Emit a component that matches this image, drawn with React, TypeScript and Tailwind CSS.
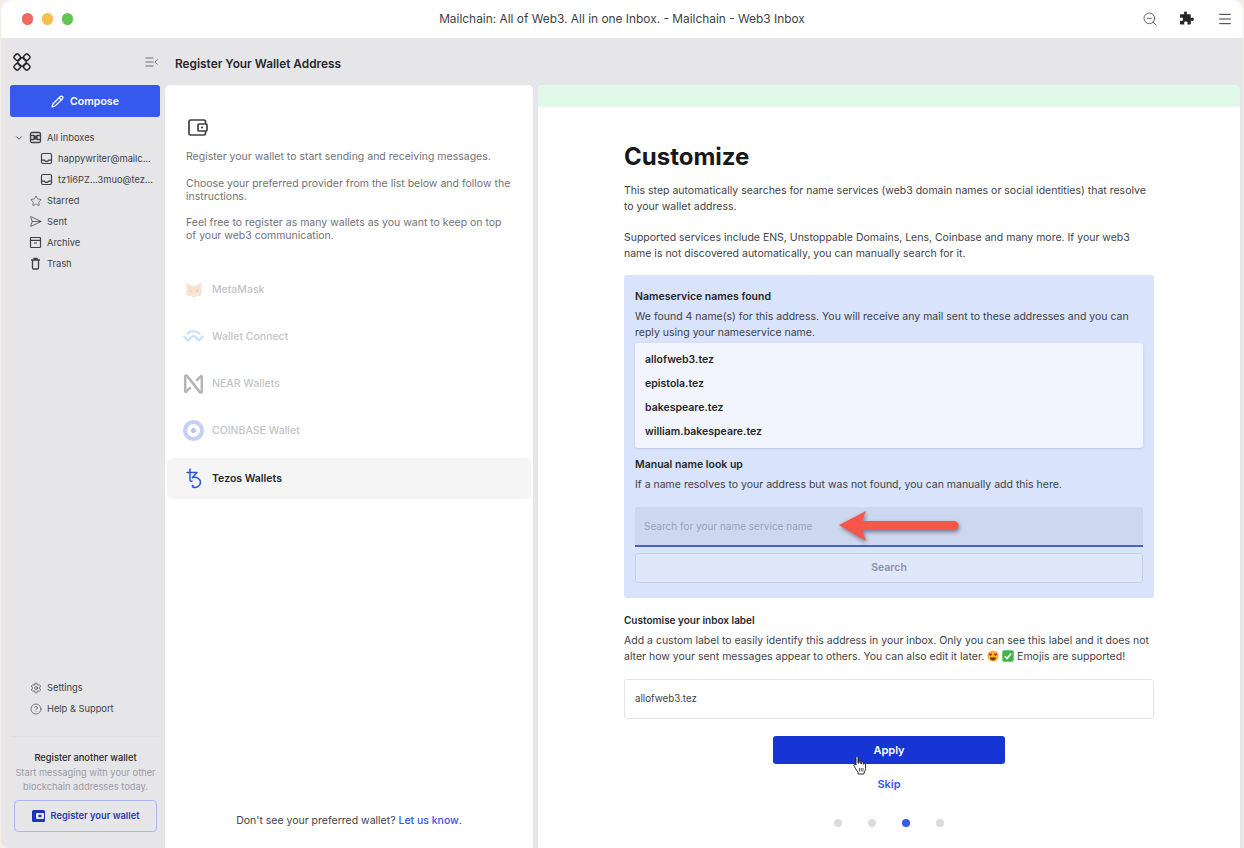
import React from 'react';
import { ChevronDown, Star, SendHorizontal, Settings, CircleHelp, ZoomOut, Menu, Pencil } from 'lucide-react';

function InboxIcon() {
  return (
    <svg width="13" height="13" viewBox="0 0 13 13" fill="none" stroke="#3f3f46" strokeWidth="1.2" className="shrink-0">
      <rect x="1.5" y="1.5" width="10" height="10" rx="1.5" />
      <path d="M1.5 8.2h3l.8 1.2h2.4l.8-1.2h3" />
    </svg>
  );
}

function AllInboxIcon() {
  return (
    <svg width="13" height="13" viewBox="0 0 13 13" fill="none" stroke="#3f3f46" strokeWidth="1.3" className="shrink-0">
      <rect x="1.5" y="1.5" width="10" height="10" rx="1.5" />
      <path d="M1.5 4.5h3l2 1.5 2-1.5h3M1.5 8.5h3l2-1.5 2 1.5h3" />
      <circle cx="6.5" cy="6.5" r="1.6" fill="#3f3f46" />
    </svg>
  );
}

function ArchiveIcon() {
  return (
    <svg width="13" height="13" viewBox="0 0 13 13" fill="none" stroke="#3f3f46" strokeWidth="1.2">
      <rect x="1.5" y="1.5" width="10" height="10" rx="0.8" />
      <path d="M1.5 4.4h10M5 7h3" />
    </svg>
  );
}

function TrashIcon() {
  return (
    <svg width="13" height="13" viewBox="0 0 13 13" fill="none" stroke="#3f3f46" strokeWidth="1.3">
      <path d="M2 3h9M5 3V1.5h3V3M3.5 3v8a1 1 0 0 0 1 1h4a1 1 0 0 0 1-1V3" />
    </svg>
  );
}

function Logo() {
  return (
    <svg width="20" height="20" viewBox="0 0 20 20" fill="none" stroke="#27272a" strokeWidth="1.5" strokeLinejoin="round">
      <rect x="2.4" y="2.4" width="5.6" height="5.6" rx="1.6" transform="rotate(45 5.2 5.2)" />
      <rect x="12" y="2.4" width="5.6" height="5.6" rx="1.6" transform="rotate(45 14.8 5.2)" />
      <rect x="2.4" y="12" width="5.6" height="5.6" rx="1.6" transform="rotate(45 5.2 14.8)" />
      <rect x="12" y="12" width="5.6" height="5.6" rx="1.6" transform="rotate(45 14.8 14.8)" />
      <rect x="6.5" y="6.5" width="7" height="7" rx="1.5" transform="rotate(45 10 10)" />
    </svg>
  );
}

function CollapseIcon() {
  return (
    <svg width="13" height="10" viewBox="0 0 13 10" fill="none" stroke="#71717a" strokeWidth="1">
      <path d="M0.5 1h8M0.5 5h8M0.5 9h8M12.5 2.5 10 5l2.5 2.5" />
    </svg>
  );
}

function WalletIcon() {
  return (
    <svg width="20" height="17" viewBox="0 0 20 17" fill="none" stroke="#3f3f46" strokeWidth="1.7" className="ml-[2px]">
      <path d="M17.5 5V2.6A1.6 1.6 0 0 0 15.9 1H2.6A1.6 1.6 0 0 0 1 2.6v11.8A1.6 1.6 0 0 0 2.6 16h13.3a1.6 1.6 0 0 0 1.6-1.6V12" />
      <rect x="10" y="5" width="9" height="7" rx="1" />
      <circle cx="14" cy="8.5" r="1.1" fill="#3f3f46" stroke="none" />
    </svg>
  );
}

function MetaMaskIcon() {
  return (
    <svg width="18" height="16" viewBox="0 0 18 16" className="opacity-30">
      <path d="M1 0.5 7 4h4l6-3.5-1 5 1 4-1.5 5-3.5-1-1 1.5H7L6 13.5 2.5 14.5 1 9.5l1-4z" fill="#e8a26c" />
      <path d="M5 7.5 7.5 9 5.500 10zM13 7.5 10.500 9l2 1z" fill="#6b4a35" />
      <path d="M7.500 12h3l-.5 2H8z" fill="#d9c6b6" />
    </svg>
  );
}

function WalletConnectIcon() {
  return (
    <svg width="21" height="13" viewBox="0 0 21 13" fill="none" stroke="#3b99fc" strokeWidth="2" strokeLinecap="round" strokeLinejoin="round" className="opacity-30">
      <path d="M4.5 3.5c3.4-2.9 8.6-2.9 12 0" />
      <path d="M1.2 6.5 5 10.5l3-3 2.5-2 2.5 2 3 3 3.8-4" />
    </svg>
  );
}

function NearIcon() {
  return (
    <svg width="22" height="22" viewBox="0 0 22 22" fill="none" stroke="#b4b4ba" strokeWidth="2.6" strokeLinejoin="round">
      <path d="M2.3 20V3.2c0-1.2 1.3-1.6 2-.7L17.700 19.500c.7.900 2 .5 2-.7V2" />
      <path d="M2.3 20 8 14.5M19.700 2 14 7.500" />
    </svg>
  );
}

function CoinbaseIcon() {
  return (
    <div className="flex h-[21px] w-[21px] items-center justify-center rounded-full bg-[#c3cff5]">
      <div className="flex h-[13px] w-[13px] items-center justify-center rounded-full bg-white">
        <div className="h-[5px] w-[5px] rounded-full bg-[#b5c4f2]" />
      </div>
    </div>
  );
}

function TezosIcon() {
  return (
    <svg width="16" height="21" viewBox="0 0 16 21" fill="none" stroke="#2c56d8" strokeWidth="1.5" strokeLinecap="round" strokeLinejoin="round">
      <path d="M4 1v3.5M1 4.5h10L6.5 9.5" />
      <path d="M4 4.5v7c0 1.5.7 2 2 1.6" />
      <path d="M6.5 9.5c4.5-.8 8 1.5 8 5 0 3.5-4.5 6-7.5 4.500-1-.5-.8-1.500 0-1.500" />
    </svg>
  );
}

function HeartEyes() {
  return (
    <svg width="12" height="12" viewBox="0 0 12 12" className="inline-block align-[-2px]">
      <circle cx="6" cy="6" r="5.6" fill="#f5b63c" />
      <path d="M3.4 6.2 1.9 4.700c-.7-1 .8-2 1.500-.9.7-1.100 2.200-.1 1.500.9zM8.600 6.200 7.100 4.700c-.7-1 .8-2 1.500-.9.7-1.100 2.200-.1 1.500.9z" fill="#e0352f" />
      <path d="M3 7.500h6c0 2-1.400 3-3 3s-3-1-3-3z" fill="#7a3b1a" />
    </svg>
  );
}

function CheckEmoji() {
  return (
    <svg width="12" height="12" viewBox="0 0 12 12" className="inline-block align-[-2px]">
      <rect x="0.3" y="0.3" width="11.4" height="11.4" rx="2" fill="#3fb54a" />
      <path d="M2.800 6.200 5 8.600l4.200-5.200" fill="none" stroke="#fff" strokeWidth="1.6" />
    </svg>
  );
}

function Arrow() {
  return (
    <svg width="124" height="32" viewBox="0 0 124 32" className="absolute left-[203px] top-[3px] drop-shadow-[1px_2px_2px_rgba(0,0,0,0.45)]">
      <path d="M1 15 28 1l-4 10h92a4 4 0 0 1 0 9H24l4 11z" fill="#f8564a" />
    </svg>
  );
}

function HandCursor() {
  return (
    <svg width="14" height="19" viewBox="0 0 14 19" className="absolute left-[80px] top-[20px]">
      <path d="M3 1.500c0-1.300 2-1.300 2 0V7l1 .2V5.500c0-1 1.700-1 1.700 0v2l.8.200V6.500c0-1 1.700-1 1.700 0v1.500l.6.200c0-1 1.700-.8 1.700.3v4c0 2-.8 3-1.500 4.500v1H5v-1.500L1 10c-.8-1.300.8-2.500 1.800-1.300L3 9z" fill="#fff" stroke="#18181b" strokeWidth="0.9" strokeLinejoin="round" />
      <path d="M6.500 12v3.500M8.300 12v3.500M10 12v3.500" stroke="#18181b" strokeWidth="0.7" />
    </svg>
  );
}

const wallets = [
  { name: 'MetaMask', icon: <MetaMaskIcon /> },
  { name: 'Wallet Connect', icon: <WalletConnectIcon /> },
  { name: 'NEAR Wallets', icon: <NearIcon /> },
  { name: 'COINBASE Wallet', icon: <CoinbaseIcon /> },
];

const names = ['allofweb3.tez', 'epistola.tez', 'bakespeare.tez', 'william.bakespeare.tez'];

function NavRow({ icon, label }: { icon: React.ReactNode; label: string }) {
  return (
    <div className="flex h-[21px] items-center gap-[5px] pl-[28px] text-[#3f3f46]">
      <span className="flex w-[13px] justify-center">{icon}</span>
      <span>{label}</span>
    </div>
  );
}

function InboxRow({ label }: { label: string }) {
  return (
    <div className="flex h-[21px] items-center gap-[5px] pl-[39px] text-[#3f3f46]">
      <InboxIcon />
      <span>{label}</span>
    </div>
  );
}

export default function App() {
  return (
    <div className="h-[848px] w-[1244px] overflow-hidden bg-[#f6ece4] text-[10.5px] leading-[16px] font-['Inter',sans-serif] text-[#3f3f46]">
      <div className="ml-[1px] flex h-[848px] w-[1242px] flex-col overflow-hidden rounded-t-[10px] rounded-bl-[8px] bg-[#e6e6e9]">
        {/* Title bar */}
        <div className="grid h-[38px] shrink-0 grid-cols-[1fr_auto_1fr] items-center bg-white">
          <div className="flex gap-[9px] pl-[21px]">
            <div className="h-[12px] w-[11px] rounded-full bg-[#ec6a5e]" />
            <div className="h-[12px] w-[11px] rounded-full bg-[#f4bf4f]" />
            <div className="h-[12px] w-[11px] rounded-full bg-[#61c554]" />
          </div>
          <div className="text-center text-[11.9px] text-[#3f3f46]">
            Mailchain: All of Web3. All in one Inbox. - Mailchain - Web3 Inbox
          </div>
          <div className="flex items-center justify-end pr-[10px]">
            <ZoomOut size={16} strokeWidth={1.2} className="text-[#3f3f46]" />
            <svg width="16" height="16" viewBox="0 0 16 16" fill="#27272a" className="ml-[20px] mr-[23px]">
              <path d="M6 1.5c0-1.500 3-1.500 3 0 0 .8-.3 1-.3 1.700H12c.5 0 .8.300.8.800V7c.700 0 1-.5 1.700-.5 1.700 0 1.700 3.500 0 3.500-.7 0-1-.5-1.700-.5v3.200c0 .5-.3.800-.8.800H9.300c0-.8.300-1 .3-1.700 0-1.800-3.500-1.800-3.500 0 0 .7.300.9.300 1.700H2.800c-.5 0-.8-.3-.8-.8V9.700c.8 0 1 .4 1.700.4 1.800 0 1.800-3.600 0-3.600-.7 0-.9.400-1.700.4V4c0-.5.300-.8.800-.8h3.500C6.300 2.500 6 2.300 6 1.500z" />
            </svg>
            <Menu size={16} strokeWidth={1.4} className="text-[#27272a]" />
          </div>
        </div>

        <div className="flex min-h-0 flex-1">
          {/* Sidebar */}
          <div className="flex w-[164px] shrink-0 flex-col text-[9.3px]">
            <div className="flex h-[47px] shrink-0 items-center justify-between pl-[11px] pr-[7px]">
              <Logo />
              <CollapseIcon />
            </div>
            <div className="pl-[9px] pr-[5px]">
              <div className="flex h-[32px] items-center justify-center gap-[6px] rounded-[3px] bg-[#3758ec] pt-[1px] text-[10.6px] font-semibold text-white">
                <Pencil size={13} strokeWidth={2.3} />
                Compose
              </div>
            </div>
            <div className="mt-[10px]">
              <div className="flex h-[21px] items-center text-[#3f3f46]">
                <ChevronDown size={10} strokeWidth={2} className="ml-[13px] mr-[5px]" />
                <AllInboxIcon />
                <span className="ml-[5px]">All inboxes</span>
              </div>
              <InboxRow label="happywriter@mailc..." />
              <InboxRow label="tz1i6PZ...3muo@tez..." />
              <NavRow icon={<Star size={12} strokeWidth={1.3} />} label="Starred" />
              <NavRow icon={<SendHorizontal size={13} strokeWidth={1.4} />} label="Sent" />
              <NavRow icon={<ArchiveIcon />} label="Archive" />
              <NavRow icon={<TrashIcon />} label="Trash" />
            </div>
            <div className="mt-auto">
              <NavRow icon={<Settings size={12} strokeWidth={1.4} />} label="Settings" />
              <NavRow icon={<CircleHelp size={12} strokeWidth={1.3} />} label="Help & Support" />
            </div>
            <div className="ml-[10px] mr-[5px] mt-[17px] border-t border-[#e0e0e3] px-[3px] pb-[16px] pt-[13px] text-center">
              <div className="font-medium leading-[16px] text-[#27272a]">Register another wallet</div>
              <div className="leading-[14px] text-[#9b9ba3]">
                Start messaging with your other
                <br />
                blockchain addresses today.
              </div>
              <div className="mt-[6px] flex h-[32px] items-center justify-center gap-[6px] rounded-[4px] border border-[#a9b8ee] font-semibold text-[#2a3cb0]">
                <svg width="13" height="12" viewBox="0 0 13 12">
                  <rect width="13" height="12" rx="1.5" fill="#1d34b4" />
                  <rect x="4" y="3" width="8" height="6" rx="1" fill="#e6e6e9" />
                  <rect x="6.5" y="4.8" width="3" height="2.4" fill="#1d34b4" />
                </svg>
                Register your wallet
              </div>
            </div>
          </div>

          {/* Main area */}
          <div className="flex min-w-0 flex-1 flex-col pr-[3px]">
            <div className="flex h-[47px] shrink-0 items-center pl-[10px] pt-[5px] text-[11.85px] font-semibold text-[#27272a]">
              Register Your Wallet Address
            </div>
            <div className="flex min-h-0 flex-1 gap-[5px]">
              {/* Wallet list panel */}
              <div className="flex w-[368px] shrink-0 flex-col rounded-t-[5px] bg-white">
                <div className="px-[21px] pt-[34px]">
                  <WalletIcon />
                  <p className="mt-[13px] text-[#71717a]">Register your wallet to start sending and receiving messages.</p>
                  <p className="mt-[12px] leading-[13px] text-[#71717a]">Choose your preferred provider from the list below and follow the instructions.</p>
                  <p className="mt-[13px] leading-[13px] text-[#71717a]">Feel free to register as many wallets as you want to keep on top of your web3 communication.</p>
                </div>
                <div className="mt-[27px] flex flex-col gap-[6px] px-[2px]">
                  {wallets.map((w) => (
                    <div key={w.name} className="flex h-[41px] items-center pl-[16px] font-medium text-[#c4c4c8]">
                      <span className="mr-[8px] flex w-[21px] justify-center">{w.icon}</span>
                      {w.name}
                    </div>
                  ))}
                  <div className="mt-[1px] flex h-[41px] items-center rounded-[5px] bg-[#f5f5f6] pl-[16px] font-semibold text-[#27272a]">
                    <span className="mr-[8px] flex w-[21px] justify-center"><TezosIcon /></span>
                    Tezos Wallets
                  </div>
                </div>
                <div className="mt-auto pb-[19px] text-center text-[#3f3f46]">
                  Don't see your preferred wallet? <span className="font-medium text-[#3758ec]">Let us know</span>.
                </div>
              </div>

              {/* Customize panel */}
              <div className="flex min-w-0 flex-1 flex-col overflow-hidden rounded-t-[5px] bg-white">
                <div className="h-[22px] shrink-0 bg-[#e0f9e9]" />
                <div className="mx-auto flex w-[530px] flex-1 flex-col">
                  <h1 className="mt-[35px] text-[24px] leading-[30px] font-bold text-[#18181b]">Customize</h1>
                  <p className="mt-[11px] text-[#3f3f46]">
                    This step automatically searches for name services (web3 domain names or social identities) that resolve to your wallet address.
                  </p>
                  <p className="mt-[15px] text-[#3f3f46]">
                    Supported services include ENS, Unstoppable Domains, Lens, Coinbase and many more. If your web3 name is not discovered automatically, you can manually search for it.
                  </p>

                  <div className="mt-[13px] h-[323px] rounded-[3px] bg-[#d9e3fb] px-[11px] pt-[14px]">
                    <div className="font-semibold text-[#27272a]">Nameservice names found</div>
                    <p className="mt-[4px] text-[#3f3f46]">
                      We found 4 name(s) for this address. You will receive any mail sent to these addresses and you can reply using your nameservice name.
                    </p>
                    <div className="mt-[2px] flex h-[105px] flex-col justify-center rounded-[3px] bg-[#f2f5fd] pl-[10px] font-semibold text-[#27272a] shadow-sm">
                      {names.map((n) => (
                        <div key={n} className="flex h-[24px] items-center">{n}</div>
                      ))}
                    </div>
                    <div className="mt-[9px] font-semibold text-[#27272a]">Manual name look up</div>
                    <p className="mt-[4px] text-[#3f3f46]">If a name resolves to your address but was not found, you can manually add this here.</p>
                    <div className="relative mt-[14px] flex h-[40px] items-center rounded-t-[2px] border-b-2 border-[#4a62c8] bg-[#cdd8f0] pl-[9px] text-[10px] text-[#9aa2ba]">
                      Search for your name service name
                      <Arrow />
                    </div>
                    <div className="mt-[6px] flex h-[30px] items-center justify-center rounded-[3px] border border-[#c6d1ea] bg-[#dfe7fb] font-semibold text-[#8d93a8]">
                      Search
                    </div>
                  </div>

                  <div className="mt-[14px] text-[10px] font-semibold text-[#27272a]">Customise your inbox label</div>
                  <p className="mt-[5px] text-[#3f3f46]">
                    Add a custom label to easily identify this address in your inbox. Only you can see this label and it does not alter how your sent messages appear to others. You can also edit it later. <HeartEyes /> <CheckEmoji /> Emojis are supported!
                  </p>
                  <div className="mt-[14px] flex h-[40px] items-center rounded-[3px] border border-[#e4e4e7] pl-[10px] text-[9.75px] text-[#3f3f46]">
                    allofweb3.tez
                  </div>
                  <div className="relative mx-auto mt-[17px] flex h-[28px] w-[232px] items-center justify-center rounded-[3px] bg-[#1735d5] text-[11px] font-semibold text-white">
                    Apply
                    <HandCursor />
                  </div>
                  <div className="mt-[12px] text-center text-[11px] font-semibold text-[#3758ec]">Skip</div>
                  <div className="mt-[27px] flex justify-center gap-[26px]">
                    <div className="h-[8px] w-[8px] rounded-full bg-[#dcdce0]" />
                    <div className="h-[8px] w-[8px] rounded-full bg-[#dcdce0]" />
                    <div className="h-[8px] w-[8px] rounded-full bg-[#3758ec]" />
                    <div className="h-[8px] w-[8px] rounded-full bg-[#dcdce0]" />
                  </div>
                </div>
              </div>
            </div>
          </div>
        </div>
      </div>
    </div>
  );
}
